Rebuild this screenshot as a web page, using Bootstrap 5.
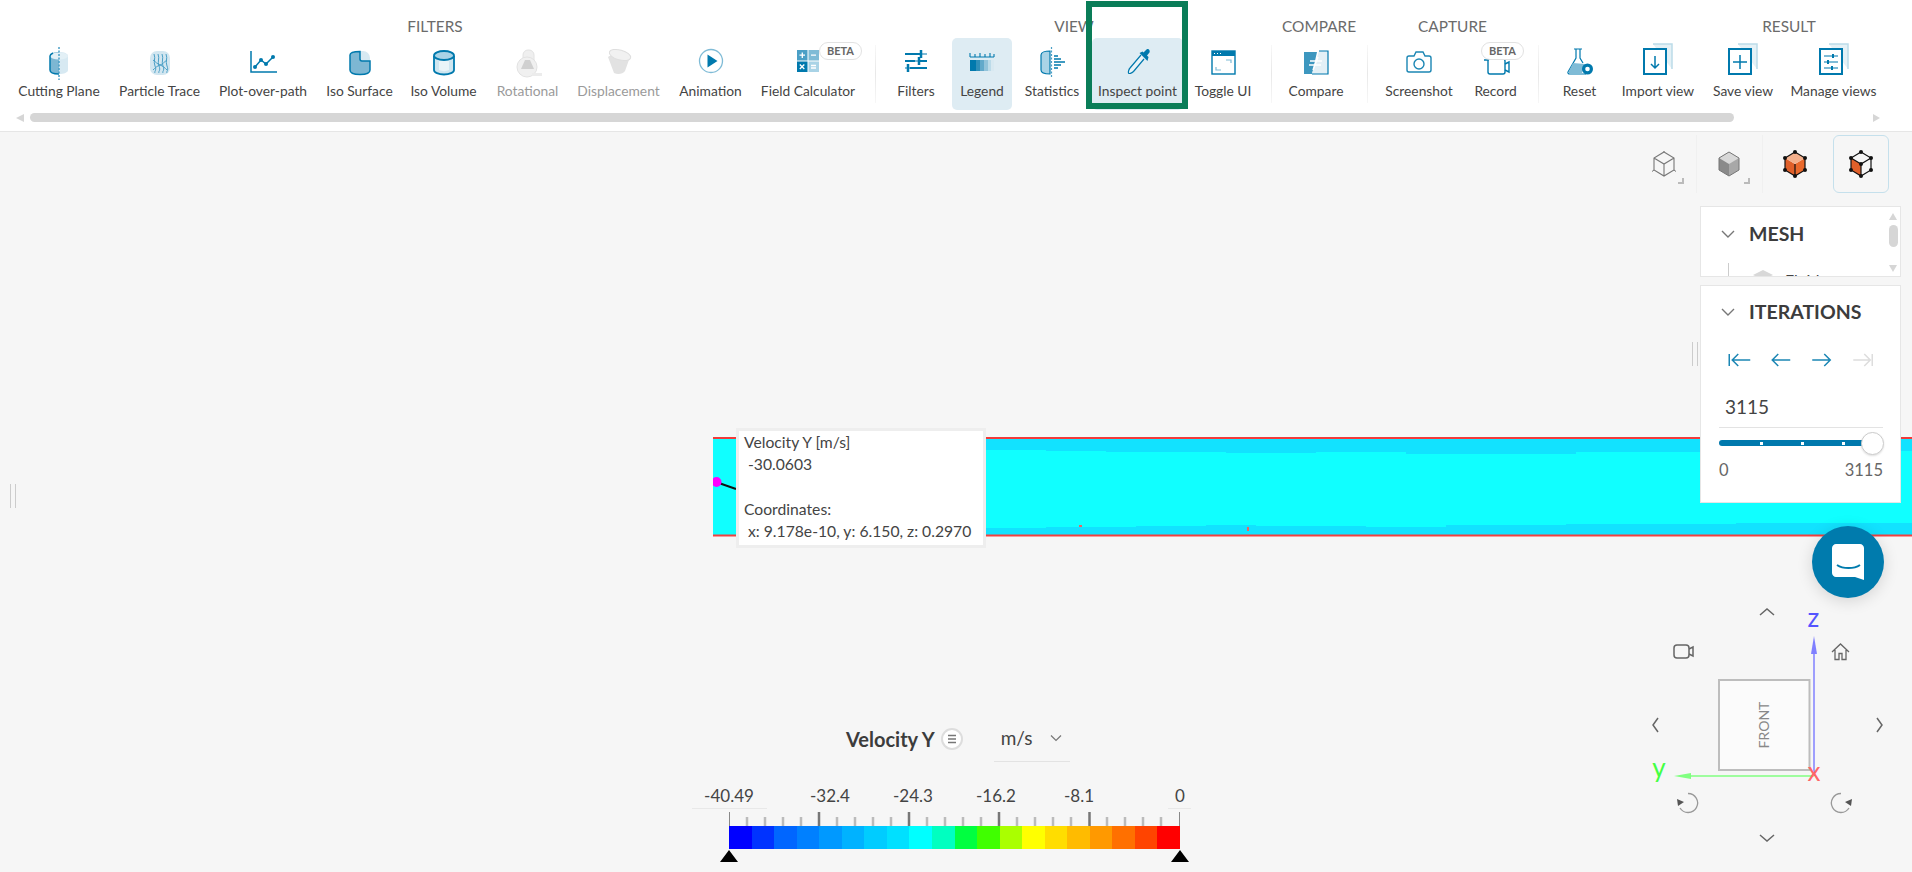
<!DOCTYPE html>
<html lang="en"><head><meta charset="utf-8"><title>Result viewer</title>
<link rel="stylesheet" href="https://cdn.jsdelivr.net/npm/bootstrap@5.3.0/dist/css/bootstrap.min.css">
<style>
html,body{height:100%;margin:0}
body{font-family:Lato,"Liberation Sans",sans-serif;background:#f6f6f6;color:#444;overflow:hidden;width:1912px;height:872px}
.topbar{height:132px;background:#fff;border-bottom:1px solid #e6e6e6;overflow:hidden}
.toolrow{padding-left:9px;height:113px}
.grp-label{height:38px;padding-top:17px;line-height:18px;font-size:15.4px;color:#6b6b6b;text-align:center;white-space:nowrap}
.grp-label-result{padding-left:146px}
.grp-label-compare{margin-left:3px}
.tool{display:flex;flex-direction:column;align-items:center;height:72px;padding:4px 0 0;border:0;border-radius:5px;font-size:13.8px;line-height:18px;color:#444;white-space:nowrap;position:relative}
.tool svg{display:block;width:32px;height:40px;flex:none}
.tool:hover{color:#444}
.tool-on{background:#deecf3}
.tool-off{color:#9a9a9a}
.tool-gap{margin-left:5px}
.sep{width:1px;height:58px;margin-top:45px;background:linear-gradient(#f7f7f7,#e8e8e8 50%,#f7f7f7);flex:none}
.sep-a{margin-left:14px;margin-right:9px}.sep-b{margin-left:8px;margin-right:7px}.sep-c{margin-left:14px;margin-right:8px}.sep-d{margin-left:9px;margin-right:8px}
.w62{width:62px}.w60{width:60px}.w64{width:64px}.w65{width:65px}.w67{width:67px}.w70{width:70px}.w74{width:74px}.w78{width:78px}.w80{width:80px}.w81{width:81px}.w86{width:86px}.w87{width:87px}.w89{width:89px}.w91{width:91px}.w92{width:92px}.w95{width:95px}.w100{width:100px}.w101{width:101px}.w103{width:103px}.w106{width:106px}
.beta{position:absolute;top:4px;height:18px;width:43px;border:1px solid #e2e2e2;border-radius:9px;background:#fff;font-size:11px;line-height:16px;font-weight:700;color:#666;text-align:center}
.beta-calc{left:64px}.beta-rec{left:19px}
.marker{position:absolute;left:-6px;top:-37px;width:102px;height:108px;border:6px solid #0a7d58;pointer-events:none}
.scrollrow{height:9px;padding:0 32px 0 16px}
.tri-l{width:0;height:0;border:4.5px solid transparent;border-left:0;border-right:8px solid #d6d6d6}
.tri-r{width:0;height:0;border:4.5px solid transparent;border-right:0;border-left:7px solid #d6d6d6;margin-left:auto}
.thumb{width:1704px;height:9px;margin-left:6px;background:#d6d6d6;border-radius:5px}
.stage{height:740px}
.band{position:absolute;left:713px;top:305px;display:block}
.probe{position:absolute;left:736px;top:296px;width:250px;height:120px;background:#fff;border:3px solid #eee;padding:0 5px;font-size:15.7px;line-height:22.2px;color:#444;white-space:pre}
.side{position:absolute;top:0;right:11px;width:201px;padding-top:3px}
.cuberow{width:260px;margin-left:-71px;height:58px;margin-bottom:13px;justify-content:flex-end}
.cubebtn{width:65.5px;height:58px;position:relative;display:flex;align-items:center;justify-content:center;border-right:1px solid #f0f0f0}
.cubebtn svg{width:32px;height:32px}
.cubebtn-on{width:56px;border:1.5px solid #c5e0ec;border-radius:6px;margin-left:5px}
.cubebtn-last{border-right:0}
.corner{position:absolute;right:12px;bottom:9px;width:6px;height:6px;border-right:2px solid #bbb;border-bottom:2px solid #bbb}
.panel{background:#fff;border:1px solid #e6e6e6;position:relative}
.panel-mesh{height:71px;overflow:hidden;margin-bottom:8px}
.panel-iter{height:218px}
.ptitle{height:54px;gap:14px;padding-left:20px;font-size:19.5px;font-weight:700;color:#3c3c3c}
.panel-iter .ptitle{height:52px}
.ptitle svg{width:14px;height:10px}
.treerow{position:relative;height:16px}
.treeline{position:absolute;left:27px;top:2px;width:1px;height:14px;background:#ccc}
.treehex{position:absolute;left:52px;top:9px;width:20px;height:14px}
.treetext{position:absolute;left:84px;top:9px;font-size:16px;line-height:20px;color:#444}
.mbar{position:absolute;right:2px;top:6px;bottom:4px;width:10px}
.mthumb{position:absolute;top:12px;left:1px;width:9px;height:22px;background:#d6d6d6;border-radius:5px}
.mup{position:absolute;top:0;left:1px;border:4.5px solid transparent;border-top:0;border-bottom:7px solid #d6d6d6}
.mdn{position:absolute;bottom:0;left:1px;border:4.5px solid transparent;border-bottom:0;border-top:7px solid #d6d6d6}
.iterarrows{height:44px;padding-left:24px}
.iterarrows svg{width:40.5px;height:20px}
.itervalue{height:46px;margin:0 17px 0 18px;padding:3px 0 0 6px;border-bottom:1px solid #e3e3e3;font-size:19px;line-height:44px;color:#444}
.slider{height:30px;margin:0 17px 0 18px;position:relative}
.strack{position:absolute;left:0;right:13px;top:12px;height:6px;background:#0079ad;border-radius:3px}
.sdot{position:absolute;top:1.5px;width:3px;height:3px;background:#fff}
.sdot-1{left:41px}.sdot-2{left:82px}.sdot-3{left:123px}
.sthumb{position:absolute;right:-1px;top:4px;width:23px;height:23px;border-radius:50%;background:#fff;border:1px solid #ccc;box-shadow:0 1px 2px rgba(0,0,0,.12)}
.slabels{margin:0 17px 0 18px;height:24px;font-size:16.5px;line-height:24px;color:#666}
.grip{position:absolute;width:6px;height:24px;border-left:1.5px solid #ccc;border-right:1.5px solid #ccc}
.grip-r{left:1692px;top:210px}.grip-l{left:10px;top:352px}
.chat{position:absolute;left:1812px;top:394px;width:72px;height:72px;border-radius:50%;background:#007bad;box-shadow:0 3px 16px rgba(0,0,0,.14)}
.chat svg{width:72px;height:72px;display:block}
.gizmo{position:absolute;left:1630px;top:458px;width:282px;height:282px}
.legendbox{position:absolute;left:680px;top:584px;width:540px}
.lhead{height:45px;padding-left:166px}
.ltitle{font-size:20px;font-weight:700;color:#3c3c3c}
.lmenu{width:22px;height:22px;margin-left:6px;border:2px solid #ddd;border-radius:50%;background:#fff}
.lmenu svg{width:18px;height:18px;display:block}
.lunit{width:76px;height:46px;margin-left:31px;padding:0 8px 0 7px;border-bottom:1px solid #e3e3e3;font-size:19px;color:#444}
.lunit svg{width:12px;height:8px}
.lscale{display:block;margin-top:24px}
</style></head>
<body>
<header class="topbar position-relative">
 <div class="d-flex toolrow">
  <section><div class="grp-label">FILTERS</div><div class="d-flex">
   <a class="btn tool w100"><svg viewBox="0 0 32 40"><path d="M16 10c-5 0-9 1.5-9 4v14c0 2.500 4 4 9 4z" fill="#7db7d3"/><path d="M16 10c5 0 9 1.500 9 4v14c0 2.500-4 4-9 4z" fill="#d7e9f2"/><ellipse cx="16" cy="14" rx="9" ry="3.500" fill="#e3f0f6"/><path d="M16 32c-5 0-9-1.500-9-4V14c0-1 1-2 3-3" fill="none" stroke="#0079ad" stroke-width="1.500"/><path d="M16 5v33" stroke="#4a9fc6" stroke-width="1.500" stroke-dasharray="2 1.500"/></svg>Cutting Plane</a>
   <a class="btn tool w101"><svg viewBox="0 0 32 40"><rect x="6" y="9" width="20" height="24" rx="7" fill="#d2e6f0"/><path d="M10 12c2 5-1 7 1 12s-1 5 0 7M14 12c2 5-1 7 1 12s-1 5 0 7M18 12c2 5-1 7 1 12s-1 5 0 7M22 12c2 5-1 7 1 12s-1 5 0 7M9 18c3 2 4 4 7 5s5 3 7 5M23 18c-3 2-4 4-7 5s-5 3-7 5" fill="none" stroke="#4a9fc6" stroke-width="1"/></svg>Particle Trace</a>
   <a class="btn tool w106"><svg viewBox="0 0 32 40"><path d="M4 9v21h26" fill="none" stroke="#0079ad" stroke-width="1.500"/><path d="M8 25l6-7 5 4 7-7" fill="none" stroke="#0079ad" stroke-width="1.500"/><g fill="#0079ad"><circle cx="8" cy="25" r="2"/><circle cx="14" cy="18" r="2"/><circle cx="19" cy="22" r="2"/><circle cx="26" cy="15" r="2"/></g></svg>Plot-over-path</a>
   <a class="btn tool w87"><svg viewBox="0 0 32 40"><rect x="6" y="9" width="20" height="24" rx="7" fill="#d7e9f2"/><path d="M6 13v15c0 3 4 4.500 10 4.500s10-1.500 10-4.500V19h-8c-1 0-2-1-2-2V9.500c-6 0-10 1.500-10 3.500z" fill="#7db7d3" stroke="#0079ad" stroke-width="1.500"/></svg>Iso Surface</a>
   <a class="btn tool w81"><svg viewBox="0 0 32 40"><path d="M6 14v14c0 2.500 4.500 4.500 10 4.500s10-2 10-4.500V14" fill="#cfe6f0" stroke="#0079ad" stroke-width="1.800"/><path d="M11 19v9c3 1.500 7 1.500 10 0v-9" fill="#e9f4f8"/><ellipse cx="16" cy="13.500" rx="10" ry="4.500" fill="#a9d3e6" stroke="#0079ad" stroke-width="1.800"/></svg>Iso Volume</a>
   <a class="btn tool w87 tool-off"><svg viewBox="0 0 32 40"><rect x="11" y="8" width="11" height="20" rx="5" fill="#efefef" stroke="#e2e2e2"/><circle cx="15" cy="25" r="10" fill="#f0f0f0" stroke="#e2e2e2"/><path d="M9 27l4-9h5l4 9z" fill="#d0d0d0"/><path d="M20 31h10v3H20z" fill="#ececec"/></svg>Rotational</a>
   <a class="btn tool w95 tool-off"><svg viewBox="0 0 32 40"><path d="M5 15l6 16c4 2 9 1 11-2l5-14c-4-3-17-5-22 0z" fill="#e2e2e2"/><ellipse cx="17" cy="13" rx="11" ry="5" transform="rotate(15 17 13)" fill="#f1f1f1" stroke="#dedede"/></svg>Displacement</a>
   <a class="btn tool w89"><svg viewBox="0 0 32 40"><circle cx="16" cy="19" r="11.500" fill="none" stroke="#7fbbd6" stroke-width="1.300"/><path d="M12.500 12.500v13l10-6.500z" fill="#0079ad"/></svg>Animation</a>
   <a class="btn tool w106"><svg viewBox="0 0 32 40"><rect x="5" y="8" width="10.500" height="10.500" fill="#4a9fc6"/><rect x="16.500" y="8" width="10.500" height="10.500" fill="#7fbbd6"/><rect x="5" y="19.500" width="10.500" height="10.500" fill="#0079ad"/><rect x="16.500" y="19.500" width="10.500" height="10.500" fill="#a9d3e6"/><path d="M7.500 13.200h5.500M10.300 10.500v5.500M19 13.200h5M7.800 22.500l4.500 4.500M12.300 22.500l-4.500 4.500M19 23.500h5M19 26h5" stroke="#fff" stroke-width="1.300"/></svg>Field Calculator<span class="beta beta-calc">BETA</span></a>
  </div></section>
  <div class="sep sep-a"></div>
  <section><div class="grp-label">VIEW</div><div class="d-flex">
   <a class="btn tool w62"><svg viewBox="0 0 32 40"><path d="M5 12h22M5 19h22M5 26h22" stroke="#7fbbd6" stroke-width="2"/><path d="M5 12h17M5 19h10M20 19h7M10 26h17" stroke="#0079ad" stroke-width="2"/><path d="M21 8v8M19 15v8M8 22v8" stroke="#0079ad" stroke-width="2.500"/></svg>Filters</a>
   <a class="btn tool w60 tool-on tool-gap"><svg viewBox="0 0 32 40"><path d="M4 15h24M4 11v4M9 12v3M14 11v4M19 12v3M24 11v4M28 12v3" fill="none" stroke="#0079ad" stroke-width="1.100"/><rect x="4" y="18" width="6" height="11" fill="#0079ad"/><rect x="10" y="18" width="4" height="11" fill="#2f8fb9"/><rect x="14" y="18" width="4" height="11" fill="#62a9ca"/><rect x="18" y="18" width="4" height="11" fill="#92c3da"/><rect x="22" y="18" width="3" height="11" fill="#bcdbe9"/><rect x="25" y="18" width="3" height="11" fill="#d8e9f1"/></svg>Legend</a>
   <a class="btn tool w70 tool-gap"><svg viewBox="0 0 32 40"><path d="M14 9c-5 0-9 1.500-9 4v15c0 2.500 4 4 9 4z" fill="#a9d3e6" stroke="#0079ad" stroke-width="1.200"/><path d="M15.500 5v31" stroke="#4a9fc6" stroke-width="1.200" stroke-dasharray="2 1.500"/><path d="M18 14h4M18 17h7M18 20h11M18 23h7M18 26h4" stroke="#0079ad" stroke-width="1.300"/></svg>Statistics</a>
   <a class="btn tool w91 tool-on tool-gap"><svg viewBox="0 0 32 40"><path d="M19 13L8 26c-1 1-2 4-1.500 5s3 .5 5-1.500L22 17" fill="#eaf4f8" stroke="#0079ad" stroke-width="1.200"/><path d="M17.500 11l8 8 1-4-1.500-1.500 2.500-3c1-2-1-4.500-3-3l-3 3-1-1z" fill="#0079ad"/></svg>Inspect point<span class="marker"></span></a>
   <a class="btn tool w80"><svg viewBox="0 0 32 40"><rect x="5" y="9" width="23" height="23" fill="#fff" stroke="#0079ad" stroke-width="1.400"/><rect x="5" y="9" width="23" height="5" fill="#0079ad"/><path d="M7 11.500h1M10 11.500h1M13 11.500h1" stroke="#fff"/><path d="M9 25v3h5M24 21v-3h-5" fill="none" stroke="#7fbbd6" stroke-width="1.200"/></svg>Toggle UI</a>
  </div></section>
  <div class="sep sep-b"></div>
  <section class="w74"><div class="grp-label grp-label-compare">COMPARE</div><div class="d-flex">
   <a class="btn tool w74"><svg viewBox="0 0 32 40"><path d="M4 10h13l-5 22H4z" fill="#3d97bf"/><path d="M19 9h9v23H12" fill="#e3f0f6" stroke="#0079ad" stroke-width="1.200"/><path d="M10 19h12M9 23h12M18 15l-5 13" stroke="#fff" stroke-width="1.500"/></svg>Compare</a>
  </div></section>
  <div class="sep sep-c"></div>
  <section><div class="grp-label">CAPTURE</div><div class="d-flex">
   <a class="btn tool w86"><svg viewBox="0 0 32 40"><path d="M6 14h5l2-4h7l2 4h4c1 0 2 1 2 2v12c0 1-1 2-2 2H6c-1 0-2-1-2-2V16c0-1 1-2 2-2z" fill="none" stroke="#1b86b4" stroke-width="1.400"/><circle cx="16" cy="22" r="5" fill="none" stroke="#1b86b4" stroke-width="1.400"/></svg>Screenshot</a>
   <a class="btn tool w67"><svg viewBox="0 0 32 40"><rect x="8" y="17" width="17" height="15" rx="2" fill="none" stroke="#0079ad" stroke-width="1.400"/><path d="M4 18h4M25 22l4-2v10l-4-2" fill="none" stroke="#0079ad" stroke-width="1.400"/></svg>Record<span class="beta beta-rec">BETA</span></a>
  </div></section>
  <div class="sep sep-d"></div>
  <section><div class="grp-label grp-label-result">RESULT</div><div class="d-flex">
   <a class="btn tool w65"><svg viewBox="0 0 32 40"><path d="M10 7h8M12 7v9L4 30c-.500 1 .5 2 1.500 2H22" fill="none" stroke="#0079ad" stroke-width="1.200"/><path d="M16 7v9l3 5" fill="none" stroke="#0079ad" stroke-width="1.200"/><path d="M9 21L4 31h14l3-9z" fill="#7fbbd6"/><circle cx="23.500" cy="27" r="5.500" fill="#0079ad"/><circle cx="23.500" cy="27" r="2.300" fill="#fff"/></svg>Reset</a>
   <a class="btn tool w92"><svg viewBox="0 0 32 40"><path d="M11 2h19v25" fill="#e5f1f6" stroke="#bcdbe9" stroke-width="1.500"/><rect x="2" y="7" width="22" height="25" fill="#fff" stroke="#0079ad" stroke-width="2"/><path d="M13 14v12M9 22l4 4 4-4" fill="none" stroke="#0079ad" stroke-width="1.500"/></svg>Import view</a>
   <a class="btn tool w78"><svg viewBox="0 0 32 40"><path d="M11 2h19v25" fill="#e5f1f6" stroke="#bcdbe9" stroke-width="1.500"/><rect x="2" y="7" width="22" height="25" fill="#fff" stroke="#0079ad" stroke-width="2"/><path d="M13 13v14M6 20h14" stroke="#0079ad" stroke-width="1.500"/></svg>Save view</a>
   <a class="btn tool w103"><svg viewBox="0 0 32 40"><path d="M11 2h19v25" fill="#e5f1f6" stroke="#bcdbe9" stroke-width="1.500"/><rect x="2" y="7" width="22" height="25" fill="#fff" stroke="#0079ad" stroke-width="2"/><path d="M6 14h14M6 20h14M6 26h14" stroke="#0079ad" stroke-width="1.200"/><path d="M15 12v4M10 18v4M14 24v4" stroke="#0079ad" stroke-width="2"/></svg>Manage views</a>
  </div></section>
 </div>
 <div class="d-flex align-items-center scrollrow"><span class="tri-l"></span><span class="thumb"></span><span class="tri-r"></span></div>
</header>
<main class="stage position-relative">
 <svg class="band" width="1199" height="100" viewBox="0 0 1199 100">
  <rect x="0" y="0" width="1199" height="99" fill="#10ffff"/>
  <path d="M273 1V13h60v1h60v1h120v1h90v-1h90v2h170v-2h160v-1h176V1z" fill="#12e2ff"/>
  <path d="M273 98v-7h60v-1h90v-1h70v-1h50v1h110v1h80v-2h120v-1h170v-1h176v12z" fill="#12e2ff"/>
  <rect x="0" y="0" width="1199" height="2" fill="#f23a3a"/>
  <rect x="0" y="97.500" width="1199" height="2" fill="#f24040"/>
  <rect x="366" y="88" width="3" height="2" fill="#f46060"/><rect x="534" y="90" width="2" height="4" fill="#f46060"/>
 </svg>
 <svg class="band" width="28" height="100" viewBox="0 0 28 100"><path d="M3 45l20 7" stroke="#111" stroke-width="2"/><circle cx="3.500" cy="45" r="5" fill="#f0f"/></svg>
 <div class="probe">Velocity Y [m/s]
 -30.0603

Coordinates:
 x: 9.178e-10, y: 6.150, z: 0.2970</div>
 <span class="grip grip-l"></span><span class="grip grip-r"></span>
 <aside class="side">
  <div class="d-flex cuberow">
   <a class="cubebtn"><svg viewBox="0 0 32 32"><path d="M16 4l10 6v12l-10 6-10-6V10zM6 10l10 6 10-6M16 16v12" fill="none" stroke="#777" stroke-width="1.100"/><path d="M16 4v-1M6 22l-2 1.500M26 22l2 1.500" stroke="#777"/></svg><span class="corner"></span></a>
   <a class="cubebtn"><svg viewBox="0 0 32 32"><path d="M16 4l10 6v12l-10 6z" fill="#a8a8a8"/><path d="M16 4L6 10v12l10 6z" fill="#8a8a8a"/><path d="M16 4l10 6-10 6-10-6z" fill="#d8d8d8"/><path d="M16 4l10 6v12l-10 6-10-6V10z" fill="none" stroke="#777"/></svg><span class="corner"></span></a>
   <a class="cubebtn cubebtn-last"><svg viewBox="0 0 32 32"><path d="M16 16l10-6v12l-10 6z" fill="#ea6a2d"/><path d="M16 16L6 10v12l10 6z" fill="#e0602a"/><path d="M16 4l10 6-10 6-10-6z" fill="#f4b08c"/><path d="M16 4l10 6v12l-10 6-10-6V10zM16 16v12" fill="none" stroke="#111" stroke-width="1.200"/><g fill="#111"><circle cx="16" cy="4" r="2"/><circle cx="26" cy="10" r="2"/><circle cx="26" cy="22" r="2"/><circle cx="16" cy="28" r="2"/><circle cx="6" cy="22" r="2"/><circle cx="6" cy="10" r="2"/></g></svg></a>
   <a class="cubebtn cubebtn-on"><svg viewBox="0 0 32 32"><path d="M16 16L6 10v12l10 6z" fill="#e0602a"/><path d="M16 4l10 6v12l-10 6-10-6V10zM6 10l10 6 10-6M16 16v12" fill="none" stroke="#111" stroke-width="1.200"/><g fill="#111"><circle cx="16" cy="4" r="2"/><circle cx="26" cy="10" r="2"/><circle cx="26" cy="22" r="2"/><circle cx="16" cy="28" r="2"/><circle cx="6" cy="22" r="2"/><circle cx="6" cy="10" r="2"/><circle cx="16" cy="16" r="2"/></g></svg></a>
  </div>
  <section class="panel panel-mesh">
   <div class="d-flex align-items-center ptitle"><svg viewBox="0 0 14 10"><path d="M1 2l6 6 6-6" fill="none" stroke="#777" stroke-width="1.400"/></svg><span>MESH</span></div>
   <div class="treerow"><span class="treeline"></span><svg class="treehex" viewBox="0 0 20 14"><path d="M10 0l10 5-10 5L0 5z" fill="#d8d8d8"/></svg><span class="treetext">Fluid</span></div>
   <div class="mbar"><span class="mup"></span><span class="mthumb"></span><span class="mdn"></span></div>
  </section>
  <section class="panel panel-iter">
   <div class="d-flex align-items-center ptitle"><svg viewBox="0 0 14 10"><path d="M1 2l6 6 6-6" fill="none" stroke="#777" stroke-width="1.400"/></svg><span>ITERATIONS</span></div>
   <div class="d-flex align-items-center iterarrows">
    <svg viewBox="0 0 40 20"><path d="M4 4v12M7 10h18M13 4l-6 6 6 6" fill="none" stroke="#1b86b4" stroke-width="1.500"/></svg>
    <svg viewBox="0 0 40 20"><path d="M6 10h18M12 4l-6 6 6 6" fill="none" stroke="#1b86b4" stroke-width="1.500"/></svg>
    <svg viewBox="0 0 40 20"><path d="M6 10h18M18 4l6 6-6 6" fill="none" stroke="#1b86b4" stroke-width="1.500"/></svg>
    <svg viewBox="0 0 40 20"><path d="M6 10h17M17 4l6 6-6 6M25 4v12" fill="none" stroke="#ddd" stroke-width="1.500"/></svg>
   </div>
   <div class="itervalue">3115</div>
   <div class="slider"><div class="strack"><i class="sdot sdot-1"></i><i class="sdot sdot-2"></i><i class="sdot sdot-3"></i></div><div class="sthumb"></div></div>
   <div class="d-flex justify-content-between slabels"><span>0</span><span>3115</span></div>
  </section>
 </aside>
 <a class="chat"><svg viewBox="0 0 72 72"><path d="M24 18h24c2 0 4 2 4 4v32l-9-3H24c-2 0-4-2-4-4V22c0-2 2-4 4-4z" fill="#fff"/><path d="M25 39c6 4 17 4 23 0" fill="none" stroke="#007bad" stroke-width="2"/></svg></a>
 <svg class="gizmo" viewBox="0 0 282 282">
  <g fill="none" stroke="#666" stroke-width="1.500"><path d="M130 25l7-6 7 6M130 245l7 6 7-6M28 128l-5 7 5 7M247 128l5 7-5 7"/></g>
  <rect x="44" y="55" width="15" height="13" rx="3" fill="none" stroke="#666" stroke-width="1.500"/><path d="M59 59l4-2v9l-4-2" fill="none" stroke="#666" stroke-width="1.500"/>
  <path d="M202 62l8.500-8 8.500 8M205 60v9.500h4v-6h3v6h4V60" fill="none" stroke="#666" stroke-width="1.300"/>
  <path d="M58 203.500A9.500 9.500 0 1 1 50 218" fill="none" stroke="#999" stroke-width="1.300"/><path d="M47 209l7 3-6 4z" fill="#555"/>
  <path d="M211 203.500A9.500 9.500 0 1 0 219 218" fill="none" stroke="#999" stroke-width="1.300"/><path d="M222 209l-7 3 6 4z" fill="#555"/>
  <rect x="89" y="90" width="90.500" height="90" fill="#fbfbfb" stroke="#bdbdbd" stroke-width="2"/>
  <text x="0" y="0" transform="translate(139 135) rotate(-90)" text-anchor="middle" font-family="Lato,sans-serif" font-size="14" fill="#888">FRONT</text>
  <path d="M184 186V55" stroke="#8080ff" stroke-width="1.500"/><path d="M184 46l3 18h-6z" fill="#8080ff"/>
  <path d="M184 186H55" stroke="#80ff80" stroke-width="1.500"/><path d="M44 186l17-3v6z" fill="#80ff80"/>
  <text x="183.500" y="37" text-anchor="middle" font-family="Lato,sans-serif" font-size="26" fill="#5555ff">z</text>
  <text x="29" y="187" text-anchor="middle" font-family="Lato,sans-serif" font-size="26" fill="#44ff44">y</text>
  <text x="184" y="191" text-anchor="middle" font-family="Lato,sans-serif" font-size="26" fill="#ff6666">x</text>
 </svg>
 <div class="legendbox">
  <div class="d-flex align-items-center lhead"><span class="ltitle">Velocity Y</span><span class="lmenu"><svg viewBox="0 0 18 18"><path d="M5 5.500h8M5 9h8M5 12.500h8" stroke="#777" stroke-width="1.300"/></svg></span><div class="d-flex align-items-center justify-content-between lunit"><span>m/s</span><svg viewBox="0 0 12 8"><path d="M1 1.500l5 5 5-5" fill="none" stroke="#777" stroke-width="1.200"/></svg></div></div>
  <svg class="lscale" width="540" height="86" viewBox="0 0 540 86">
   <g font-family="Lato,sans-serif" font-size="17" fill="#444" text-anchor="middle"><text x="49" y="17">-40.49</text><text x="150" y="17">-32.4</text><text x="233" y="17">-24.3</text><text x="316" y="17">-16.2</text><text x="399" y="17">-8.1</text><text x="500" y="17">0</text></g>
   <path d="M12 23.500h75M488 23.500h23" stroke="#e8e8e8"/>
   <g stroke="#bbb" stroke-width="2.500"><path d="M67 32v9M85 32v9M103 32v9M121 32v9M157 32v9M175 32v9M193 32v9M211 32v9M247 32v9M265 32v9M283 32v9M301 32v9M337 32v9M355 32v9M373 32v9M391 32v9M427 32v9M445 32v9M463 32v9M481 32v9"/></g>
   <g stroke="#777" stroke-width="2.500"><path d="M139 27v14M229 27v14M319 27v14M409.500 27v14"/></g>
   <path d="M49.500 27v14M499.500 27v14" stroke="#888"/>
   <g shape-rendering="crispEdges"><rect x="49" y="41" width="23" height="23" fill="#0000ff"/><rect x="71.500" y="41" width="23" height="23" fill="#0033ff"/><rect x="94" y="41" width="23" height="23" fill="#0066ff"/><rect x="116.700" y="41" width="23" height="23" fill="#0080ff"/><rect x="139.200" y="41" width="23" height="23" fill="#0099ff"/><rect x="161.700" y="41" width="23" height="23" fill="#00b2ff"/><rect x="184.300" y="41" width="23" height="23" fill="#00ccff"/><rect x="206.800" y="41" width="23" height="23" fill="#00e0ff"/><rect x="229.400" y="41" width="23" height="23" fill="#00ffff"/><rect x="251.900" y="41" width="23" height="23" fill="#00ffc0"/><rect x="274.500" y="41" width="23" height="23" fill="#00ff40"/><rect x="297" y="41" width="23" height="23" fill="#40ff00"/><rect x="319.600" y="41" width="23" height="23" fill="#aaff00"/><rect x="342.100" y="41" width="23" height="23" fill="#ffff00"/><rect x="364.700" y="41" width="23" height="23" fill="#ffdd00"/><rect x="387.200" y="41" width="23" height="23" fill="#ffbb00"/><rect x="409.800" y="41" width="23" height="23" fill="#ff9900"/><rect x="432.300" y="41" width="23" height="23" fill="#ff7000"/><rect x="454.900" y="41" width="23" height="23" fill="#ff4400"/><rect x="477.400" y="41" width="22.600" height="23" fill="#ff0000"/></g>
   <path d="M49 65l9 12H40zM500 65l9 12h-18z" fill="#000"/>
  </svg>
 </div>
</main>
<script src="https://cdn.jsdelivr.net/npm/bootstrap@5.3.0/dist/js/bootstrap.bundle.min.js"></script>
</body></html>
